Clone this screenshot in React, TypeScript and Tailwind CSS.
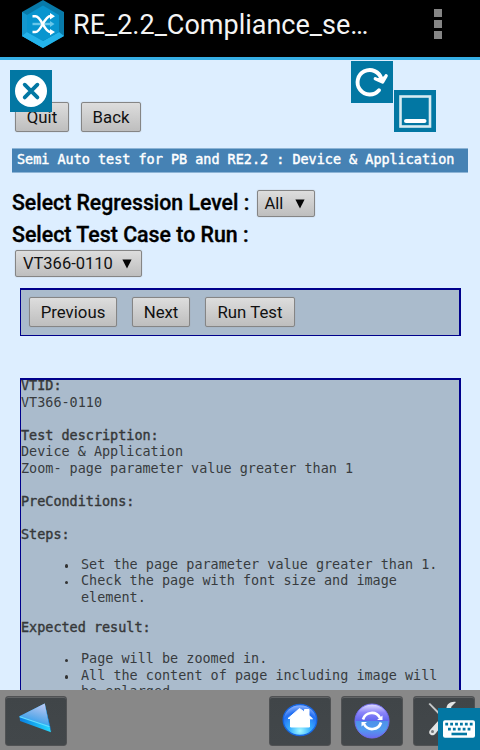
import React from "react";

const face =
  "flex items-center justify-center rounded-[2px] border border-[#858585] bg-linear-to-b from-[#dddddd] to-[#bebebe] font-[Roboto,sans-serif] text-[#111] shadow-[0_0_1px_#999] whitespace-nowrap";

function Button({ label, className }: { label: string; className: string }) {
  return <button className={`${face} h-[30px] pt-px text-[16.800px] ${className}`}>{label}</button>;
}

function Picker({ label, className }: { label: string; className: string }) {
  return (
    <button className={`${face} h-[27px] justify-between! pl-[7px] pr-[9px] pt-[2px] text-[16.500px] ${className}`}>
      <span>{label}</span>
      <svg className="-mt-[2px]" width="10" height="10" viewBox="0 0 10 10">
        <path d="M.4.5h9.2L5 9.6z" fill="#050505" />
      </svg>
    </button>
  );
}

function Heading({ children }: { children: string }) {
  return <div className="[-webkit-text-stroke:0.4px_#333]">{children}</div>;
}

function Step({ children }: { children: React.ReactNode }) {
  return (
    <li className="flex whitespace-nowrap">
      <span className="ml-[0.500px] mr-[13px] mt-[7.500px] size-[3.500px] shrink-0 rounded-full bg-[#333]" />
      <div>{children}</div>
    </li>
  );
}

function Key({ children }: { children: React.ReactNode }) {
  return (
    <button className="flex h-[50px] w-[62px] items-center justify-center rounded-[3px] border border-[#505254] bg-linear-to-b from-[#404548] to-[#42474a] shadow-[inset_0_1px_0_#606365]">
      {children}
    </button>
  );
}

function AppLogo() {
  return (
    <svg width="42" height="48" viewBox="0 0 42 48">
      <path d="M21 0 42 12v24L21 48 0 36V12z" fill="#087aa9" />
      <path d="M0 12v24l21 12V40L5 31V15z" fill="#1497ce" />
      <path d="m0 36 21 12 21-12-5-4-16 9-16-9z" fill="#24b3ea" />
      <path d="M21 5.5 37 15v17l-16 9-16-9V15z" fill="#0895cf" />
      <g fill="none" stroke="#68c7ea" strokeWidth="2.4">
        <path d="M10.5 24H30" />
        <path d="m28 21 4.5 3-4.5 3z" fill="#68c7ea" stroke="none" />
      </g>
      <g fill="none" stroke="white" strokeWidth="2.5">
        <path d="M10.5 16.2h3c6 0 8.500 16 15 16h1M10.500 32h3c6 0 8.500-16 15-16h1" />
        <path d="m28 13 5 3.200-5 3.200zM28 28.900l5 3.200-5 3.200z" fill="white" stroke="none" />
      </g>
    </svg>
  );
}

function CloseIcon() {
  return (
    <svg className="absolute left-[10px] top-[70px] bg-[#0277a3]" width="42" height="42" viewBox="0 0 42 42">
      <circle cx="21" cy="21" r="16" fill="white" />
      <path d="m14.700 14.700 12.700 12.700m0-12.700-12.700 12.700" stroke="#0277a3" strokeWidth="3.800" strokeLinecap="round" />
    </svg>
  );
}

function RefreshIcon() {
  return (
    <svg className="absolute left-[351px] top-[61px] bg-[#0277a3]" width="42" height="42" viewBox="0 0 42 42">
      <path d="M28 29.200A12.200 12.200 0 1 1 30.500 18" fill="none" stroke="white" strokeWidth="3.900" strokeLinecap="round" />
      <path d="m24.300 17.700 7.300 3.300 3.500-6.200" fill="white" stroke="white" strokeWidth="3.400" strokeLinecap="round" strokeLinejoin="round" />
    </svg>
  );
}

function WindowIcon() {
  return (
    <svg className="absolute left-[394px] top-[90px] bg-[#0277a3]" width="42" height="42" viewBox="0 0 42 42">
      <rect x="6.500" y="6.500" width="29.500" height="30" fill="none" stroke="#d7ebf2" strokeWidth="2.600" />
      <path d="M12 31h18.500" stroke="white" strokeWidth="4" strokeLinecap="round" />
    </svg>
  );
}

function KeyboardIcon() {
  return (
    <svg className="absolute left-[438px] top-[708px] bg-[#0277a3]" width="42" height="42" viewBox="0 0 42 42">
      <rect x="5" y="12.300" width="32" height="17.400" rx="2" fill="white" />
      <g stroke="#0277a3" strokeWidth="2.800">
        <path d="M7.300 16.200h27.500" strokeDasharray="2.800 2.100" />
        <path d="M10 21.200h23" strokeDasharray="2.800 2.100" />
        <path d="M13.500 26h15.500" strokeWidth="2.600" />
      </g>
    </svg>
  );
}

function BackGlyph() {
  return (
    <svg width="62" height="50" viewBox="0 0 62 50">
      <defs>
        <linearGradient id="backTop" x1=".8" y1="0" x2=".4" y2="1">
          <stop stopColor="#c0c9f4" />
          <stop offset=".55" stopColor="#6daeea" />
          <stop offset="1" stopColor="#209cf1" />
        </linearGradient>
        <linearGradient id="backSide">
          <stop stopColor="#087de1" />
          <stop offset="1" stopColor="#25d9ff" />
        </linearGradient>
      </defs>
      <path d="M14 20 40 7l6.500 29.500L14.500 25z" fill="url(#backSide)" />
      <path d="M14 20 40 7l5 23z" fill="url(#backTop)" />
      <path d="m40 7 7 29-2-5z" fill="#137dd8" />
      <path d="m14 20.500 31 10.500" stroke="#65d9ff" strokeWidth="1.200" />
    </svg>
  );
}

function HomeGlyph() {
  return (
    <svg className="-mt-[2px]" width="36" height="36" viewBox="0 0 36 36">
      <defs>
        <radialGradient id="homeOrb" cy=".85" r=".85">
          <stop stopColor="#a5f9ff" />
          <stop offset=".35" stopColor="#39b3ff" />
          <stop offset=".72" stopColor="#2470f3" />
          <stop offset="1" stopColor="#9cbdff" />
        </radialGradient>
      </defs>
      <ellipse cx="18" cy="18" rx="16.800" ry="15.500" fill="url(#homeOrb)" stroke="#1765df" strokeWidth="1.300" />
      <path d="m6 16.500 11.500-10 5 3.500V7.500h4.500v6l3.500 3.300h-3V25H8.500v-8.500z" fill="white" stroke="white" strokeLinejoin="round" />
    </svg>
  );
}

function SyncGlyph() {
  return (
    <svg className="-mt-px" width="36" height="36" viewBox="0 0 36 36">
      <defs>
        <linearGradient id="syncOrb" x2="0" y2="1">
          <stop stopColor="#e5e2ff" />
          <stop offset=".25" stopColor="#8c85fa" />
          <stop offset=".5" stopColor="#5e65ef" />
          <stop offset=".51" stopColor="#4e91e9" />
          <stop offset=".75" stopColor="#519bef" />
          <stop offset="1" stopColor="#686cf1" />
        </linearGradient>
      </defs>
      <circle cx="18" cy="18" r="17" fill="url(#syncOrb)" stroke="#716bf0" strokeWidth="1" />
      <g fill="none" stroke="white" strokeWidth="2.700">
        <path d="M9 16.500a9.200 9.200 0 0 1 17-1.500M27 19.500a9.200 9.200 0 0 1-17 1.500" />
        <path d="M28.500 12.500V17H23zM7.500 23.500V19H13z" fill="white" stroke="none" />
      </g>
    </svg>
  );
}

function ToolsGlyph() {
  return (
    <svg width="40" height="40" viewBox="0 0 40 40">
      <path d="m4.500 3 1.500-1 12 12-1.500 1.500z" fill="#c6c9ca" />
      <path d="m6 29 17-19c-2-5 2-10 9-9l-5 5 2 5 6-3c0 6-5 8-9 6L12 32c-3 5-9 1-6-3z" fill="#e3e4e4" />
      <circle cx="8.500" cy="30.500" r="1.500" fill="#777b7d" />
    </svg>
  );
}

export default function App() {
  return (
    <div className="relative flex h-[750px] w-[480px] flex-col overflow-hidden bg-[#ddeeff] font-[Roboto,sans-serif]">
      <header className="flex h-[60px] shrink-0 items-start border-b-[3px] border-[#36afe5] bg-black pl-[22px] text-[#f4f4f4]">
        <AppLogo />
        <h1 className="ml-[9px] mt-[7px] w-[301px] whitespace-nowrap text-[27px] leading-[36px]">RE_2.2_Compliance_se…</h1>
        <div className="ml-[60px] mt-[9px] flex flex-col gap-[3px]">
          <i className="size-2 bg-[#858585]" />
          <i className="size-2 bg-[#858585]" />
          <i className="size-2 bg-[#858585]" />
        </div>
      </header>

      <main className="min-h-0 flex-1 overflow-hidden">
        <div className="flex gap-3 pl-[15px] pt-[42px]">
          <Button label="Quit" className="w-[54px]" />
          <Button label="Back" className="w-[60px]" />
        </div>
        <div className="ml-3 mt-4 h-[25px] w-[456px] whitespace-pre border-y border-[#8db4d6] bg-[#4682b4] pl-[5px] font-['DejaVu_Sans_Mono',monospace] text-[13.460px] leading-[21px] text-white [-webkit-text-stroke:0.45px_white]">
          Semi Auto test for PB and RE2.2 : Device &amp; Application
        </div>
        <div className="ml-3 mt-[17px] flex h-[27px] items-center">
          <span className="-mt-[2px] w-[244.500px] shrink-0 whitespace-nowrap text-[21.250px] font-medium leading-[26px] [-webkit-text-stroke:0.35px_black]">Select Regression Level :</span>
          <Picker label="All" className="w-[58px]" />
        </div>
        <div className="ml-3 mt-[5px] h-[28px] whitespace-nowrap text-[21.350px] font-medium leading-[26px] [-webkit-text-stroke:0.35px_black]">Select Test Case to Run :</div>
        <div className="h-[38px] pl-[15px]">
          <Picker label="VT366-0110" className="w-[127px]" />
        </div>

        <div className="ml-5 flex h-[48px] w-[441px] items-start border border-r-2 border-t-2 border-[#00008b] bg-[#aabbcc] pl-[8px] pt-[7px]">
          <Button label="Previous" className="w-[88px]" />
          <Button label="Next" className="ml-[15px] w-[58px]" />
          <Button label="Run Test" className="ml-[15px] w-[90px]" />
        </div>

        <section className="ml-5 mt-[42px] h-[400px] w-[441px] overflow-hidden border border-r-2 border-t-2 border-[#00008b] bg-[#aabbcc] font-['DejaVu_Sans_Mono',monospace] text-[13.460px] leading-[16.500px] text-[#383b3e]">
          <div className="-mt-[2px]">
            <Heading>VTID:</Heading>
            <div>VT366-0110</div>
            <br />
            <Heading>Test description:</Heading>
            <div>Device &amp; Application</div>
            <div>Zoom- page parameter value greater than 1</div>
            <br />
            <Heading>PreConditions:</Heading>
            <br />
            <Heading>Steps:</Heading>
            <ul className="mt-[13.500px] pl-[43px]">
              <Step>Set the page parameter value greater than 1.</Step>
              <Step>Check the page with font size and image<br />element.</Step>
            </ul>
            <div className="mt-[13.500px]"><Heading>Expected result:</Heading></div>
            <ul className="mt-[15px] pl-[43px]">
              <Step>Page will be zoomed in.</Step>
              <Step>All the content of page including image will<br />be enlarged.</Step>
            </ul>
          </div>
        </section>
      </main>

      <footer className="flex h-[60px] shrink-0 items-start bg-[#888888] pl-[5px] pt-[6px]">
        <Key><BackGlyph /></Key>
        <div className="ml-[202px] flex gap-[10px]">
          <Key><HomeGlyph /></Key>
          <Key><SyncGlyph /></Key>
          <Key><ToolsGlyph /></Key>
        </div>
      </footer>

      <CloseIcon />
      <RefreshIcon />
      <WindowIcon />
      <KeyboardIcon />
    </div>
  );
}
